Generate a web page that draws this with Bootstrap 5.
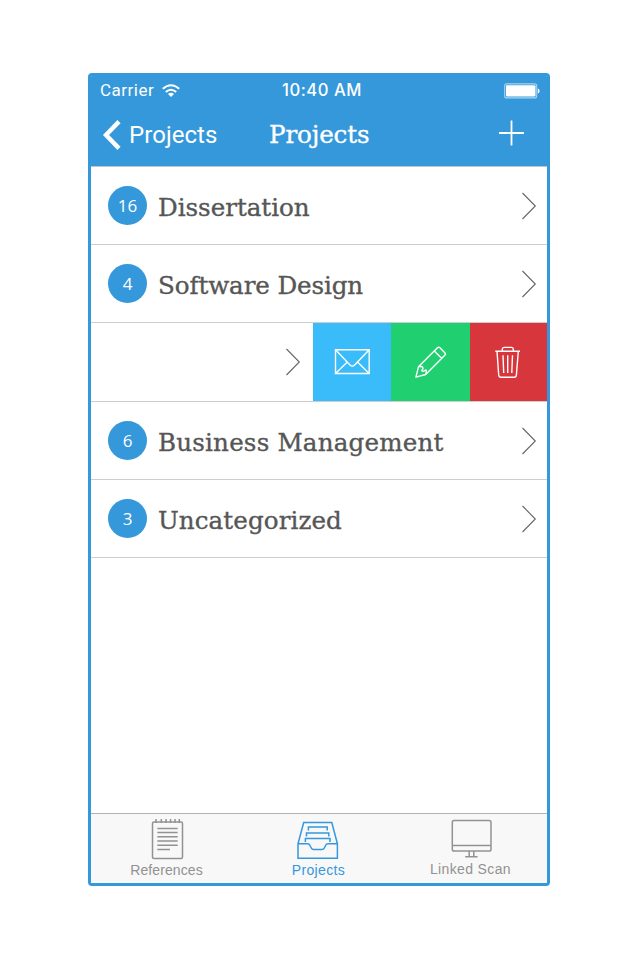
<!DOCTYPE html>
<html lang="en">
<head>
<meta charset="utf-8">
<meta name="viewport" content="width=device-width, initial-scale=1">
<title>Projects</title>
<link href="https://cdn.jsdelivr.net/npm/bootstrap@5.3.0/dist/css/bootstrap.min.css" rel="stylesheet">
<style>
body{background:#fff;padding:73px 0 0 88px;height:960px;overflow:hidden}
svg{display:block;flex:none;fill:none}
.phone{width:462px;height:813px;border:3px solid #3598db;border-radius:4px;overflow:hidden}
.topbar{height:90px;background:#3598db;font-family:Roboto,sans-serif}
.status{height:29px;padding:0 7px 0 9px;font-size:17px;line-height:29px}
.carrier{width:182px;letter-spacing:.5px}
.clock{font:500 16.6px/29px Inter,sans-serif;letter-spacing:.55px}
.titlebar{height:60px;padding:0 22px 0 11px}
.back{width:167px;font-size:24px;line-height:30px;letter-spacing:.05px}
.slab{font-family:"DejaVu Serif",serif;font-size:24.6px;line-height:30px;-webkit-text-stroke:.35px currentColor}
.screen-title{letter-spacing:-.15px}
.plus{margin-bottom:3px}
.rows{border-top:1px solid #bfc6cb;margin-top:0}
.item{height:78px;border-bottom:1px solid #cdcdcd;padding:0 10px 0 17px}
.item.tall{height:79px}
.count{width:39px;height:39px;border-radius:50%;background:#3598db;color:#fff;font:17px/39px "Open Sans",sans-serif;margin-right:11px}
.name{color:#565656;padding-top:4px}
.n1{letter-spacing:-.04px}.n2{letter-spacing:-.12px}.n3{letter-spacing:.18px}.n4{letter-spacing:.08px}
.item.swiped{padding:0}
.peek{width:222px;padding-right:12px}
.act{height:78px}
.blue{width:78px;background:#39bcf9}.green{width:79px;background:#20cf70}.red{width:77px;background:#d7363c}
.tabs{height:70px;border-top:1px solid #b2b2b2;background:#f8f8f8;font:14px/16px "Liberation Sans",sans-serif;color:#929292;padding-top:2px}
.tab svg{stroke:currentColor;stroke-width:1.5}
.tab span{margin-top:2px;margin-right:1px}
.tab.on{color:#3598db}
.ls1{letter-spacing:.1px}.ls2{letter-spacing:.36px}
.up{margin-top:1px!important}
</style>
</head>
<body>
<div class="phone d-flex flex-column">
  <header class="topbar text-white">
    <div class="status d-flex align-items-center">
      <div class="carrier d-flex align-items-center">Carrier
        <svg class="ms-2" width="18" height="14" viewBox="0 0 18 14" stroke="#fff" stroke-width="2"><path d="M.8 4.8Q9-2.4 17.2 4.8M3.8 8Q9 3.4 14.2 8"/><path d="M6 10Q9 7.6 12 10L9 13Z" fill="#fff" stroke="none"/></svg>
      </div>
      <div class="clock">10:40 AM</div>
      <svg class="ms-auto" width="36" height="16" viewBox="0 0 36 16"><rect x=".7" y=".9" width="32" height="14" rx="2" stroke="#a9d3f0" stroke-width="1.1"/><rect x="2" y="2.2" width="29.5" height="11.4" rx="1" fill="#fff"/><path d="M33.8 5.4Q35.6 5.8 35.6 8T33.8 10.6Z" fill="#fff"/></svg>
    </div>
    <div class="titlebar d-flex align-items-center">
      <div class="back d-flex align-items-center">
        <svg width="19" height="32" viewBox="0 0 19 32" stroke="#fff" stroke-width="4.4"><path d="M17 2.6 4 16 17 29.4"/></svg><span class="ms-2">Projects</span>
      </div>
      <div class="slab screen-title">Projects</div>
      <svg class="plus ms-auto" width="27" height="27" viewBox="0 0 27 27" stroke="#fff" stroke-width="1.8"><path d="M13.5 .5v25M1 13H26"/></svg>
    </div>
  </header>
  <main class="rows flex-grow-1">
    <div class="item d-flex align-items-center"><div class="count text-center">16</div><div class="slab name n1">Dissertation</div>
      <svg class="ms-auto" width="16" height="28" viewBox="0 0 16 28" stroke="#666" stroke-width="1.1"><path d="M1.5 1 14.3 14 1.5 27"/></svg></div>
    <div class="item d-flex align-items-center"><div class="count text-center">4</div><div class="slab name n2">Software Design</div>
      <svg class="ms-auto" width="16" height="28" viewBox="0 0 16 28" stroke="#666" stroke-width="1.1"><path d="M1.5 1 14.3 14 1.5 27"/></svg></div>
    <div class="item tall swiped d-flex align-items-center">
      <div class="peek d-flex justify-content-end"><svg width="16" height="28" viewBox="0 0 16 28" stroke="#666" stroke-width="1.1"><path d="M1.5 1 14.3 14 1.5 27"/></svg></div>
      <div class="act blue"><svg width="78" height="78" stroke="#fff" stroke-width="1.4"><path d="M22.5 26.7H56.2V50.5H22.5ZM22.5 26.7 37 41.9Q39.3 44.3 41.6 41.9L56.2 26.7M22.5 50.5 34.3 39M56.2 50.5 44.5 39"/></svg></div>
      <div class="act green"><svg width="78" height="78" stroke="#fff" stroke-width="1.4" stroke-linejoin="round"><path d="M24.9 54.1 27.5 43.8 46.7 24.6Q47.7 23.7 48.7 24.6L54 30Q55 31 54 32L34.7 51.5ZM27.5 43.8Q31 43 31.8 44.3T30.7 47.6Q32.5 48.9 34.3 47.3T34.7 51.5M43.3 28 50.8 35.4"/></svg></div>
      <div class="act red"><svg width="77" height="78" stroke="#fff" stroke-width="1.4"><path d="M25.3 28.3H50M32.3 28V26.2Q32.3 24.4 34 24.4H41.6Q43.3 24.4 43.3 26.2V28M27 28.3 28.7 52Q29 54.3 31 54.3H44.2Q46.2 54.3 46.4 52L48.3 28.3M33 32.3 33.7 50M37.7 32.3V50M42.5 32.3 41.8 50"/></svg></div>
    </div>
    <div class="item d-flex align-items-center"><div class="count text-center">6</div><div class="slab name n3">Business Management</div>
      <svg class="ms-auto" width="16" height="28" viewBox="0 0 16 28" stroke="#666" stroke-width="1.1"><path d="M1.5 1 14.3 14 1.5 27"/></svg></div>
    <div class="item d-flex align-items-center"><div class="count text-center">3</div><div class="slab name n4">Uncategorized</div>
      <svg class="ms-auto" width="16" height="28" viewBox="0 0 16 28" stroke="#666" stroke-width="1.1"><path d="M1.5 1 14.3 14 1.5 27"/></svg></div>
  </main>
  <nav class="tabs d-flex">
    <div class="tab col-4 d-flex flex-column align-items-center"><svg width="44" height="44"><rect x="7.5" y="6" width="30" height="36.5" rx="1.5"/><path d="M11 3v4M16.3 3v4M21 3v4M25.6 3v4M30 3v4M34.3 3v4M12.3 12.4H32.7M12.3 16.6H32.7M12.3 20.8H32.7M12.3 25H32.7M12.3 29.2H32.7M12.3 33.4H25"/></svg><span class="ls1">References</span></div>
    <div class="tab on col-4 d-flex flex-column align-items-center"><svg width="44" height="44"><path d="M1 27.7 6.7 6.5H34.8L40.4 27.7V42.3H1V27.7H10.5Q12.3 27.7 13 29.5L14.3 32Q15 33.5 16.6 33.5H25Q26.6 33.5 27.3 32L28.6 29.5Q29.3 27.7 31 27.7H40.4M11.4 14.5V11H30.2V14.5M9.5 20.5V17H31.8V20.5M8.4 26V22.6H33V26"/></svg><span class="ls2">Projects</span></div>
    <div class="tab col-4 d-flex flex-column align-items-center"><svg width="44" height="44"><rect x="3.3" y="4.6" width="38.7" height="30.4" rx="1.8"/><path d="M3.3 29.4H42M20.2 35v5.6M24.8 35v5.6M16.2 40.7H28.6"/></svg><span class="ls2 up">Linked Scan</span></div>
  </nav>
</div>
<script src="https://cdn.jsdelivr.net/npm/bootstrap@5.3.0/dist/js/bootstrap.bundle.min.js"></script>
</body>
</html>
